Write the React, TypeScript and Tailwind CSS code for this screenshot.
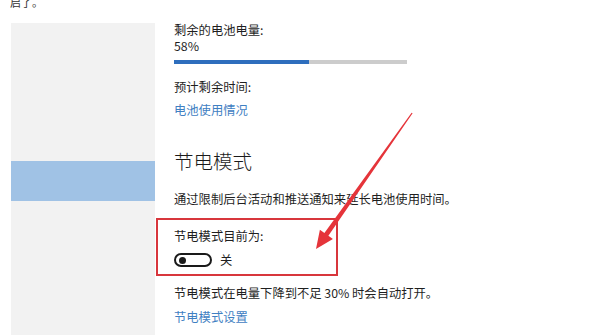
import React from "react";

const font = { fontFamily: '"Noto Sans CJK SC", "Noto Sans", sans-serif' };

export default function App() {
  return (
    <div
      className="relative w-[600px] h-[335px] bg-white overflow-hidden text-[#1f1f1f]"
      style={font}
    >
      <div className="h-[23px] overflow-hidden pl-[10px]">
        <div className="text-[11px] leading-[11px] -mt-[3px] text-[#333]">启了。</div>
      </div>
      <div className="flex h-[312px]">
        <div className="ml-[11px] w-[144px] bg-[#f2f2f2] pt-[138px]">
          <div className="h-[40px] bg-[#a0c2e5]" />
        </div>
        <div className="ml-[19px] flex flex-col text-[12.3px] leading-[16px]">
          <div className="-mt-[1px]">剩余的电池电量:</div>
          <div>58%</div>
          <div className="mt-[6px] w-[233px] h-[4px] bg-[#cccccc] flex">
            <div className="h-full bg-[#2e6ebd]" style={{ width: "58%" }} />
          </div>
          <div className="mt-[15px]">预计剩余时间:</div>
          <div className="mt-[7px] text-[#3f80c2]">电池使用情况</div>
          <div className="mt-[30px] text-[19.5px] leading-[26px] font-light text-[#1a1a1a]">节电模式</div>
          <div className="mt-[17px]">通过限制后台活动和推送通知来延长电池使用时间。</div>
          <div className="mt-[11px] -ml-[18px] w-[182px] border-2 border-[#d8363c] pl-[16px] pt-[8px] pb-[7px]">
            <div>节电模式目前为:</div>
            <div className="mt-[9px] flex items-center">
              <div className="w-[38px] h-[14px] rounded-full border-2 border-[#1a1a1a] flex items-center pl-[3px]">
                <div className="w-[7px] h-[7px] rounded-full bg-[#1a1a1a]" />
              </div>
              <span className="ml-[8px] leading-[14px]">关</span>
            </div>
          </div>
          <div className="mt-[9px]">节电模式在电量下降到不足 30% 时会自动打开。</div>
          <div className="mt-[8px] text-[#3f80c2]">节电模式设置</div>
        </div>
      </div>
      <svg className="absolute left-0 top-0" width="600" height="335" viewBox="0 0 600 335">
        <polygon
          points="412.6,113.3 411.6,112.7 324.4,232.9 319.9,229.7 316,249 332.9,238.9 328.4,235.7"
          fill="#e5343a"
        />
      </svg>
    </div>
  );
}
